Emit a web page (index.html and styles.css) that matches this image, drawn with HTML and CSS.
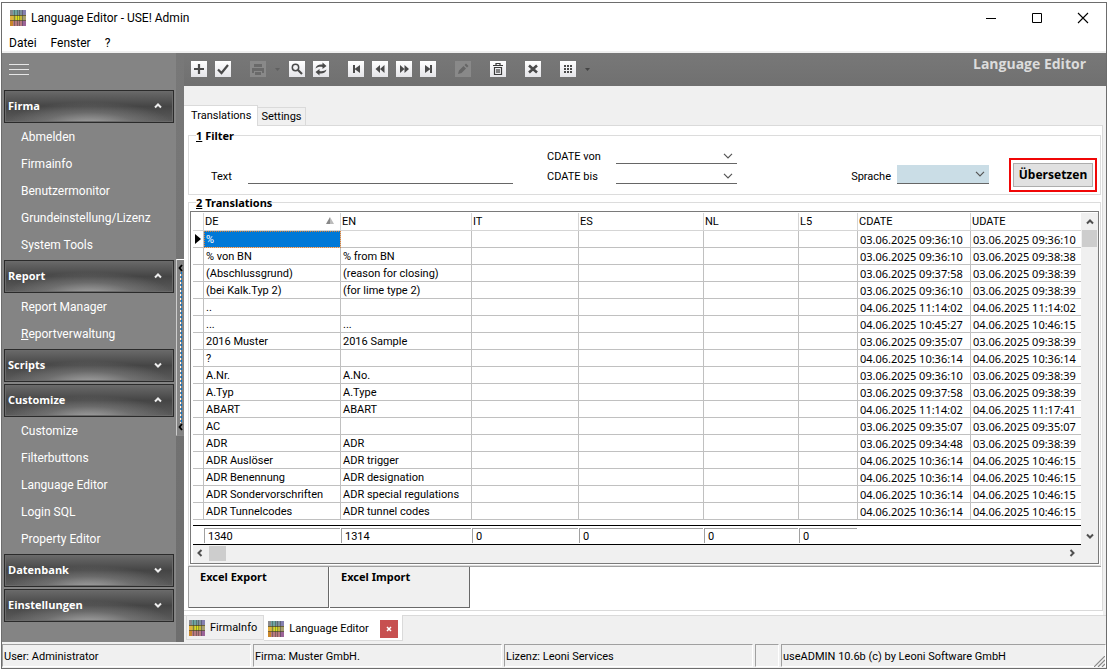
FILE: index.html
```html
<!DOCTYPE html>
<html lang="de">
<head>
<meta charset="utf-8">
<title>Language Editor - USE! Admin</title>
<link rel="stylesheet" href="styles.css">
</head>
<body>
<svg class="defs" aria-hidden="true">
  <symbol id="plaid" viewBox="0 0 16 16">
    <rect width="16" height="5" fill="#7e8f9c"/><rect y="5" width="16" height="6" fill="#c2b83c"/><rect y="11" width="16" height="5" fill="#b87a80"/>
    <rect width="3" height="5" fill="#8a8a8e"/><rect x="3" width="5" height="5" fill="#6fa3a0"/><rect x="12" width="4" height="5" fill="#8480b0"/>
    <rect y="6" width="3" height="5" fill="#e3b040"/><rect x="6" y="6" width="4" height="4" fill="#d8de20"/><rect x="12" y="6" width="4" height="5" fill="#a8a070"/>
    <rect y="11" width="3" height="5" fill="#c8862a"/><rect x="12" y="11" width="4" height="5" fill="#9c6498"/>
    <path d="M0 5.500h16M0 10.500h16" stroke="#4a4030" stroke-opacity=".7"/>
    <path d="M4.500 0v16M7.500 0v16M9.500 0v16M12.500 0v16" stroke="#2e3430" stroke-opacity=".4"/>
  </symbol>
  <symbol id="up" viewBox="0 0 8 8"><path d="M1 5.500 4 2.500 7 5.500" fill="none" stroke="currentColor" stroke-width="2"/></symbol>
  <symbol id="down" viewBox="0 0 8 8"><path d="M1 2.500 4 5.500 7 2.500" fill="none" stroke="currentColor" stroke-width="2"/></symbol>
  <symbol id="left" viewBox="0 0 8 8"><path d="M5.500 1 2.500 4 5.500 7" fill="none" stroke="currentColor" stroke-width="2"/></symbol>
  <symbol id="right" viewBox="0 0 8 8"><path d="M2.500 1 5.500 4 2.500 7" fill="none" stroke="currentColor" stroke-width="2"/></symbol>
  <symbol id="combo" viewBox="0 0 10 6"><path d="M1 .8 5 4.800 9 .8" fill="none" stroke="#555" stroke-width="1.200"/></symbol>
</svg>
<div class="window">
  <header class="titlebar">
    <svg class="icon16"><use href="#plaid"/></svg>
    <h1>Language Editor - USE! Admin</h1>
    <button class="winbtn" aria-label="Minimize"><svg viewBox="0 0 12 12"><path d="M1 6.500h10" stroke="#000"/></svg></button>
    <button class="winbtn" aria-label="Maximize"><svg viewBox="0 0 12 12"><path d="M1.500 1.500h9v9h-9z" fill="none" stroke="#000"/></svg></button>
    <button class="winbtn" aria-label="Close"><svg viewBox="0 0 12 12"><path d="M1 1l10 10M11 1 1 11" stroke="#000" stroke-width="1.100"/></svg></button>
  </header>
  <nav class="menubar"><button>Datei</button><button>Fenster</button><button>?</button></nav>
  <div class="body">
    <aside class="sidebar">
      <button class="burger" aria-label="Menu"><i></i><i></i><i></i></button>
      <section><button class="group">Firma<svg><use href="#up"/></svg></button>
        <a href="#">Abmelden</a><a href="#">Firmainfo</a><a href="#">Benutzermonitor</a><a href="#">Grundeinstellung/Lizenz</a><a href="#">System Tools</a></section>
      <section><button class="group">Report<svg><use href="#up"/></svg></button>
        <a href="#">Report Manager</a><a href="#"><u>R</u>eportverwaltung</a></section>
      <section><button class="group">Scripts<svg><use href="#down"/></svg></button></section>
      <section><button class="group">Customize<svg><use href="#up"/></svg></button>
        <a href="#">Customize</a><a href="#">Filterbuttons</a><a href="#">Language Editor</a><a href="#">Login SQL</a><a href="#">Property Editor</a></section>
      <section><button class="group">Datenbank<svg><use href="#down"/></svg></button></section>
      <section><button class="group">Einstellungen<svg><use href="#down"/></svg></button></section>
    </aside>
    <div class="splitter"><button class="grip" aria-label="Collapse sidebar"><svg viewBox="0 0 5 8"><path d="M4 1 1.500 4 4 7" fill="none" stroke="#000" stroke-width="1.800"/></svg><span class="dots"></span><svg viewBox="0 0 5 8"><path d="M4 1 1.500 4 4 7" fill="none" stroke="#000" stroke-width="1.800"/></svg></button></div>
    <main class="main">
      <div class="toolbar">
        <div class="tools"><button class="tool" aria-label="Add"><svg viewBox="0 0 16 16"><path d="M8 3v10M3 8h10" stroke="#4a4a4a" stroke-width="2.200"/></svg></button>
          <button class="tool" aria-label="Confirm"><svg viewBox="0 0 16 16"><path d="M3 8.500l3.500 3.500L13 4" fill="none" stroke="#4a4a4a" stroke-width="2.200"/></svg></button></div>
        <div class="tools"><button class="tool off" aria-label="Print" disabled><svg viewBox="0 0 16 16"><path d="M4 3h8v3H4zM2 7h12v5h-2v-2H4v2H2zM5 11h6v3H5z" fill="#6a6a6a"/></svg></button>
          <svg class="drop" viewBox="0 0 5 3"><path d="M0 0h5L2.500 3z" fill="#606060"/></svg>
          <button class="tool" aria-label="Search"><svg viewBox="0 0 16 16"><circle cx="6.500" cy="6.500" r="3.200" fill="none" stroke="#4a4a4a" stroke-width="1.500"/><path d="M9 9l4 4" stroke="#4a4a4a" stroke-width="2.200"/></svg></button>
          <button class="tool" aria-label="Refresh"><svg viewBox="0 0 16 16"><path d="M2.500 7.500c.5-3 3.500-4.500 7-4V1.500L13.500 5 9.500 8V6C6.500 5.500 4.500 6 2.500 7.500zM13.500 8.500c-.5 3-3.500 4.500-7 4v2L2.500 11l4-3v2c3 .5 5 0 7-1.500z" fill="#4a4a4a"/></svg></button></div>
        <div class="tools"><button class="tool" aria-label="First"><svg viewBox="0 0 16 16"><path d="M5 4h2v8H5zM12 4v8L6.500 8z" fill="#4a4a4a"/></svg></button>
          <button class="tool" aria-label="Previous"><svg viewBox="0 0 16 16"><path d="M8 4v8L3.500 8zM12.500 4v8L8 8z" fill="#4a4a4a"/></svg></button>
          <button class="tool" aria-label="Next"><svg viewBox="0 0 16 16"><path d="M4 4v8l4.500-4zM8.500 4v8L13 8z" fill="#4a4a4a"/></svg></button>
          <button class="tool" aria-label="Last"><svg viewBox="0 0 16 16"><path d="M10 4h2v8h-2zM5 4v8l5.500-4z" fill="#4a4a4a"/></svg></button></div>
        <div class="tools"><button class="tool off" aria-label="Edit" disabled><svg viewBox="0 0 16 16"><path d="M3 13l1-3.500L8.500 5 11 7.500 6.500 12zM9.500 4 11 2.500 13.500 5 12 6.500z" fill="#666"/></svg></button></div>
        <div class="tools"><button class="tool" aria-label="Delete"><svg viewBox="0 0 16 16"><path d="M3 4.500h10M6 4V2.500h4V4M4.500 6.500h7v7h-7zM7 8v4M9 8v4" fill="none" stroke="#3a3a3a" stroke-width="1.200"/></svg></button></div>
        <div class="tools"><button class="tool" aria-label="Cancel"><svg viewBox="0 0 16 16"><path d="M4 4.500l8 7M12 4.500l-8 7" stroke="#4a4a4a" stroke-width="2.600"/></svg></button></div>
        <div class="tools"><button class="tool" aria-label="Grid"><svg viewBox="0 0 16 16"><path d="M4 5h8M4 8h8M4 11h8" stroke="#4a4a4a" stroke-width="2" stroke-dasharray="2 1"/></svg></button>
          <svg class="drop" viewBox="0 0 5 3"><path d="M0 0h5L2.500 3z" fill="#444"/></svg></div>
        <h2>Language Editor</h2>
      </div>
      <div class="tabs"><button class="tab active">Translations</button><button class="tab">Settings</button></div>
      <div class="page">
        <fieldset class="filter">
          <legend><u>1</u> Filter</legend>
          <div class="filter-row">
            <div class="textfield"><label for="text">Text</label><input id="text" type="text"></div>
            <div class="dates">
              <label for="von">CDATE von</label><div class="combo"><select id="von"><option></option></select><svg><use href="#combo"/></svg></div>
              <label for="bis">CDATE bis</label><div class="combo"><select id="bis"><option></option></select><svg><use href="#combo"/></svg></div>
            </div>
            <div class="lang"><label for="sprache">Sprache</label><div class="combo tinted"><select id="sprache"><option></option></select><svg><use href="#combo"/></svg></div></div>
            <div class="marked"><button>Übersetzen</button></div>
          </div>
        </fieldset>
        <fieldset class="result">
          <legend><u>2</u> Translations</legend>
          <div class="gridbox">
            <div class="gridview">
              <table>
                <colgroup><col class="c-mark"><col class="c-de"><col class="c-en"><col class="c-it"><col class="c-es"><col class="c-nl"><col class="c-l5"><col class="c-date"><col></colgroup>
                <thead><tr><th></th><th>DE<svg class="sort" viewBox="0 0 8 7"><path d="M4 0v7h4z" fill="#bbb"/><path d="M4 0v7H0z" fill="#888"/></svg></th><th>EN</th><th>IT</th><th>ES</th><th>NL</th><th>L5</th><th>CDATE</th><th>UDATE</th></tr></thead>
                <tbody>
<tr><td class="mark"><svg viewBox="0 0 6 10"><path d="M0 0l6 5-6 5z"/></svg></td><td class="selected">%</td><td></td><td></td><td></td><td></td><td></td><td class="date">03.06.2025 09:36:10</td><td class="date">03.06.2025 09:36:10</td></tr>
<tr><td></td><td>% von BN</td><td>% from BN</td><td></td><td></td><td></td><td></td><td class="date">03.06.2025 09:36:10</td><td class="date">03.06.2025 09:38:38</td></tr>
<tr><td></td><td>(Abschlussgrund)</td><td>(reason for closing)</td><td></td><td></td><td></td><td></td><td class="date">03.06.2025 09:37:58</td><td class="date">03.06.2025 09:38:39</td></tr>
<tr><td></td><td>(bei Kalk.Typ 2)</td><td>(for lime type 2)</td><td></td><td></td><td></td><td></td><td class="date">03.06.2025 09:36:10</td><td class="date">03.06.2025 09:38:39</td></tr>
<tr><td></td><td>..</td><td></td><td></td><td></td><td></td><td></td><td class="date">04.06.2025 11:14:02</td><td class="date">04.06.2025 11:14:02</td></tr>
<tr><td></td><td>...</td><td>...</td><td></td><td></td><td></td><td></td><td class="date">04.06.2025 10:45:27</td><td class="date">04.06.2025 10:46:15</td></tr>
<tr><td></td><td>2016 Muster</td><td>2016 Sample</td><td></td><td></td><td></td><td></td><td class="date">03.06.2025 09:35:07</td><td class="date">03.06.2025 09:38:39</td></tr>
<tr><td></td><td>?</td><td></td><td></td><td></td><td></td><td></td><td class="date">04.06.2025 10:36:14</td><td class="date">04.06.2025 10:36:14</td></tr>
<tr><td></td><td>A.Nr.</td><td>A.No.</td><td></td><td></td><td></td><td></td><td class="date">03.06.2025 09:36:10</td><td class="date">03.06.2025 09:38:39</td></tr>
<tr><td></td><td>A.Typ</td><td>A.Type</td><td></td><td></td><td></td><td></td><td class="date">03.06.2025 09:37:58</td><td class="date">03.06.2025 09:38:39</td></tr>
<tr><td></td><td>ABART</td><td>ABART</td><td></td><td></td><td></td><td></td><td class="date">04.06.2025 11:14:02</td><td class="date">04.06.2025 11:17:41</td></tr>
<tr><td></td><td>AC</td><td></td><td></td><td></td><td></td><td></td><td class="date">03.06.2025 09:35:07</td><td class="date">03.06.2025 09:35:07</td></tr>
<tr><td></td><td>ADR</td><td>ADR</td><td></td><td></td><td></td><td></td><td class="date">03.06.2025 09:34:48</td><td class="date">03.06.2025 09:38:39</td></tr>
<tr><td></td><td>ADR Auslöser</td><td>ADR trigger</td><td></td><td></td><td></td><td></td><td class="date">04.06.2025 10:36:14</td><td class="date">04.06.2025 10:46:15</td></tr>
<tr><td></td><td>ADR Benennung</td><td>ADR designation</td><td></td><td></td><td></td><td></td><td class="date">04.06.2025 10:36:14</td><td class="date">04.06.2025 10:46:15</td></tr>
<tr><td></td><td>ADR Sondervorschriften</td><td>ADR special regulations</td><td></td><td></td><td></td><td></td><td class="date">04.06.2025 10:36:14</td><td class="date">04.06.2025 10:46:15</td></tr>
<tr><td></td><td>ADR Tunnelcodes</td><td>ADR tunnel codes</td><td></td><td></td><td></td><td></td><td class="date">04.06.2025 10:36:14</td><td class="date">04.06.2025 10:46:15</td></tr>
                </tbody>
              </table>
              <div class="totals"><span>1340</span><span>1314</span><span>0</span><span>0</span><span>0</span><span>0</span></div>
            </div>
            <div class="vscroll"><svg><use href="#up"/></svg><i></i><svg class="end"><use href="#down"/></svg></div>
            <div class="hscroll"><svg><use href="#left"/></svg><i></i><svg class="end"><use href="#right"/></svg></div>
          </div>
        </fieldset>
        <div class="actions"><button>Excel Export</button><button>Excel Import</button></div>
      </div>
      <div class="doctabs">
        <button class="doctab"><svg class="icon16"><use href="#plaid"/></svg>FirmaInfo</button>
        <div class="doctab active"><svg class="icon16"><use href="#plaid"/></svg>Language Editor<button class="close" aria-label="Close tab"><svg viewBox="0 0 6 6"><path d="M1 1l4 4M5 1 1 5" stroke="#fff" stroke-width="1.500"/></svg></button></div>
      </div>
    </main>
  </div>
  <footer class="status">
    <span>User: Administrator</span><span>Firma: Muster GmbH.</span><span>Lizenz: Leoni Services</span><span></span><span>useADMIN 10.6b (c) by Leoni Software GmbH</span>
    <svg class="sizer" viewBox="0 0 11 11"><path d="M0 11 11 0M4 11l7-7M8 11l3-3" stroke="#888" stroke-width="1.200"/></svg>
  </footer>
</div>
</body>
</html>
```
FILE: styles.css
```css
* { box-sizing: border-box; }
body {
  margin: 0;
  padding: 2px 0 1px 1px;
  min-height: 100vh;
  display: flex;
  background: #fff;
  color: #000;
  font: 11px/14px Roboto, sans-serif;
}
button, input, select { font: inherit; color: inherit; margin: 0; padding: 0; border: 0; background: none; border-radius: 0; }
.defs { position: absolute; width: 0; height: 0; }
svg { display: block; flex: none; }
.icon16 { width: 16px; height: 16px; }
.window { flex: 1; display: flex; flex-direction: column; border: 1px solid #6d6d6d; min-width: 0; }

.titlebar, .menubar, .sidebar { font-size: 12px; }
.titlebar { display: flex; align-items: center; height: 29px; padding-left: 8px; }
.titlebar h1 { flex: 1; margin: 0 0 0 5px; font-size: 12px; font-weight: 400; }
.winbtn { width: 46px; height: 29px; display: flex; align-items: center; justify-content: center; }
.winbtn svg { width: 12px; height: 12px; }
.menubar { display: flex; gap: 14px; height: 21px; padding: 2px 0 0 7px; border-bottom: 2px solid #f0f0f0; }

.body { flex: 1; display: flex; min-height: 0; }
.sidebar { width: 174px; padding: 0 2px; background: #848484; color: #fff; }
.burger { display: flex; flex-direction: column; gap: 4px; width: 20px; margin: 11px 0 15px 5px; }
.burger i { height: 1px; background: #e6e6e6; }
.sidebar section { display: flex; flex-direction: column; margin-bottom: 2px; }
.group {
  display: flex; align-items: center; justify-content: space-between;
  height: 33px; padding: 0 11px 2px 3px;
  border: 1px solid #2b2b2b;
  box-shadow: inset 0 0 0 1px #6a6a6a;
  background: radial-gradient(ellipse 50% 75% at 50% 110%, #a8a8a8, rgba(140, 140, 140, .45) 55%, transparent), linear-gradient(#6a6a6a, #454545 50%, #5c5c5c);
  font: 700 11px/14px "Open Sans", sans-serif;
}
.group svg { width: 8px; height: 8px; color: #eee; }
.sidebar a { height: 27px; padding-left: 17px; line-height: 28px; color: #fff; text-decoration: none; }

.splitter { width: 8px; padding-top: 206px; background: linear-gradient(#787878, #6e6e6e); }
.grip { display: flex; flex-direction: column; align-items: center; justify-content: space-between; width: 8px; height: 177px; padding: 4px 0; border-left: 1px solid #ccc; border-top: 1px solid #fff; border-bottom: 1px solid #888; background: #848484; }
.grip svg { width: 5px; height: 8px; }
.dots { flex: 1; width: 2px; background: conic-gradient(#0078d7 25%, #848484 0 50%, #fff 0 75%, #848484 0) 0 0 / 2px 4px; }

.main { flex: 1; display: flex; flex-direction: column; min-width: 0; background: #f0f0f0; }
.toolbar { display: flex; gap: 19px; height: 33px; padding: 8px 20px 0 7px; background: linear-gradient(#787878, #707070); }
.tools { display: flex; gap: 8px; }
.tool { width: 16px; height: 16px; background: linear-gradient(#fff, #e4e4e8); }
.tool.off { background: #898989; }
.drop { width: 5px; height: 3px; margin: 7px 1px 0; }
.toolbar h2 { flex: 1; margin: -8px 0 0; text-align: right; font: 700 14px/22px "Open Sans", sans-serif; color: #dcdcdc; }

.tabs { display: flex; align-items: flex-end; height: 39px; }
.tab { height: 18px; padding: 0 3px; border: 1px solid #dadada; border-bottom: 0; border-left: 0; }
.tab.active { position: relative; height: 21px; margin-bottom: -1px; padding: 0 6px 1px 7px; background: #fff; }
.page { flex: 1; display: flex; flex-direction: column; margin: 0 3px 4px 0; padding: 2px 1px 2px 4px; border: 1px solid #dadada; border-left: 0; background: #fff; box-shadow: 0 4px #fff; }
fieldset { margin: 0; padding: 0; border: 1px solid #dcdcdc; min-width: 0; }
legend { margin-left: 7px; padding: 0; height: 14px; line-height: 16px; }
legend, .actions, .marked { font-family: "Noto Sans", sans-serif; font-weight: 700; }
.filter-row { display: flex; align-items: flex-end; height: 52px; padding: 0 3px 2px 22px; }
.filter-row > :not(.marked) { margin-bottom: 8px; }
.textfield { display: flex; align-items: flex-end; }
.textfield label { width: 37px; }
.textfield input { width: 265px; height: 16px; border-bottom: 1px solid #666; }
label { height: 16px; line-height: 17px; }
.dates { display: grid; grid-template-columns: 69px 121px; row-gap: 4px; margin-left: 34px; }
.combo { display: grid; height: 16px; border-bottom: 1px solid #666; }
.combo select { grid-area: 1 / 1; appearance: none; width: 100%; height: 15px; }
.combo svg { grid-area: 1 / 1; width: 10px; height: 6px; justify-self: end; align-self: center; margin-right: 4px; pointer-events: none; }
.lang { display: flex; align-items: flex-end; gap: 6px; margin-left: auto; }
.tinted { width: 92px; height: 19px; background: #cadde6; }
.marked { margin-left: 20px; padding: 3px 2px; border: 2px solid #f00707; }
.marked button { display: block; height: 24px; width: 80px; border: 1px solid #adadad; background: #e1e1e1; font-size: 12px; }

.result { flex: 1; display: flex; flex-direction: column; }
.gridbox { flex: 1; display: grid; grid-template: 1fr 18px / 1fr 17px; margin: 2px 1px 1px; padding: 1px 0 0 2px; border: 1px solid #7a7a7a; }
.gridview { display: flex; flex-direction: column; min-width: 0; }
table { width: 100%; table-layout: fixed; border-collapse: separate; border-spacing: 0; }
.c-mark { width: 11px; } .c-de { width: 137px; } .c-en { width: 131px; } .c-it { width: 107px; } .c-es { width: 125px; }
.c-nl { width: 95px; } .c-l5 { width: 59px; } .c-date { width: 113px; }
th { height: 18px; padding: 1px 1px 0; border-right: 1px solid #d5d5d5; border-bottom: 1px solid #d5d5d5; text-align: left; font-weight: 400; line-height: 16px; }
td { height: 17px; padding: 2px 0 0 2px; border-right: 1px solid #c0c0c0; border-bottom: 1px solid #c0c0c0; line-height: 14px; white-space: nowrap; }
.date { font-family: "Noto Sans", sans-serif; }
th:last-child, td:last-child { border-right: 0; }
.sort { float: right; width: 8px; height: 7px; margin: 3px 5px 0 0; }
.mark { padding-top: 0; }
.mark svg { width: 6px; height: 10px; }
.selected { background: #0078d7; color: #fff; outline: 1px dotted #e08030; outline-offset: -1px; }
.totals { display: grid; grid-template-columns: 137px 131px 107px 125px 95px 59px; height: 20px; margin-top: auto; padding: 2px 0 0 11px; border-top: 1px solid #000; border-bottom: 1px solid #000; }
.totals span { height: 15px; padding-left: 3px; border-top: 1px solid #a0a0a0; border-left: 1px solid #a0a0a0; margin-right: 1px; line-height: 16px; }
.vscroll, .hscroll { display: flex; align-items: center; background: #f0f0f0; color: #505050; }
.vscroll { flex-direction: column; padding: 5px 0; }
.hscroll { grid-column: 1 / 3; padding: 0 22px 2px 3px; }
.vscroll svg, .hscroll svg { width: 8px; height: 8px; }
.vscroll i { width: 15px; height: 17px; margin-top: 4px; background: #cdcdcd; }
.hscroll i { width: 17px; height: 15px; margin-left: 5px; background: #cdcdcd; }
.vscroll .end { margin-top: auto; }
.hscroll .end { margin-left: auto; }
.actions { display: flex; gap: 1px; height: 42px; border-top: 1px solid #a0a0a0; border-left: 1px solid #a0a0a0; }
.actions button { width: 140px; padding: 3px 0 0 11px; border-right: 1px solid #696969; border-bottom: 1px solid #696969; background: #f0f0f0; text-align: left; display: flex; }

.doctabs { display: flex; height: 27px; align-items: flex-start; padding-left: 2px; border-top: 1px solid #dadada; }
.doctab { display: flex; align-items: center; gap: 5px; height: 24px; padding: 0 6px 0 2px; border: 1px solid #dadada; border-top: 0; }
.doctab.active { height: 26px; margin-top: -1px; padding: 2px 4px 0; border-left: 0; background: #fff; }
.close { display: grid; place-items: center; width: 18px; height: 18px; margin-left: 6px; background: #c75050; }
.close svg { width: 6px; height: 6px; }

.status { position: relative; display: grid; grid-template-columns: 249px 249px 249px 24px 1fr; gap: 2px; height: 26px; padding: 2px 0 0; background: #f0f0f0; }
.status span { height: 23px; padding-left: 1px; border: 1px solid #fff; border-top-color: #a0a0a0; border-left-color: #a0a0a0; line-height: 23px; white-space: nowrap; }
.sizer { position: absolute; right: 1px; bottom: 1px; width: 11px; height: 11px; }
```
